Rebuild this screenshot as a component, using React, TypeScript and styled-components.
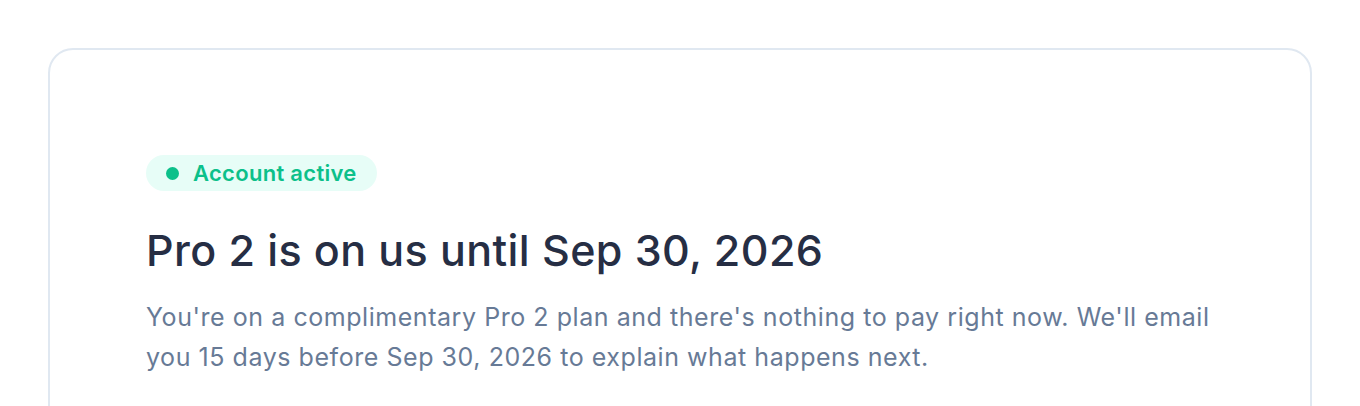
import React from 'react';
import styled, { createGlobalStyle } from 'styled-components';

const GlobalStyle = createGlobalStyle`
    html, body {
        margin: 0;
        padding: 0;
        background: #ffffff;
    }
    body {
        font-family: Inter, "Noto Sans", "Liberation Sans", sans-serif;
        -webkit-font-smoothing: antialiased;
    }
`;

const Page = styled.div`
    padding: 48px 48px 0 48px;
    height: 406px;
    box-sizing: border-box;
    overflow: hidden;
`;

const Card = styled.section`
    border: 2px solid #e0e8f1;
    border-radius: 25px;
    background: #ffffff;
    padding: 105px 96px 64px 96px;
    min-height: 500px;
    display: flex;
    flex-direction: column;
    align-items: flex-start;
`;

const StatusPill = styled.div<{ $tone: string; $bg: string }>`
    display: inline-flex;
    align-items: center;
    gap: 14px;
    height: 36px;
    padding: 0 20px 0 20px;
    border-radius: 18px;
    background: ${(p) => p.$bg};
    color: ${(p) => p.$tone};
    font-size: 22px;
    font-weight: 560;
    letter-spacing: 0.3px;
`;

const Dot = styled.span<{ $tone: string }>`
    width: 13px;
    height: 13px;
    border-radius: 50%;
    background: ${(p) => p.$tone};
`;

const Title = styled.h1`
    margin: 33px 0 0 0;
    font-size: 43px;
    line-height: 52px;
    font-weight: 550;
    color: #262e44;
    letter-spacing: 0.4px;
`;

const Body = styled.p`
    margin: 21px 0 0 0;
    max-width: 1080px;
    font-size: 25px;
    line-height: 40px;
    font-weight: 400;
    color: #677a96;
    letter-spacing: 0.55px;
`;

const App = () => {
    const until = 'Sep 30, 2026';

    return (
        <Page>
            <GlobalStyle />
            <Card>
                <StatusPill $tone="#0cc08a" $bg="#e7fdf7">
                    <Dot $tone="#0cc08a" />
                    Account active
                </StatusPill>
                <Title>Pro 2 is on us until {until}</Title>
                <Body>
                    You're on a complimentary Pro 2 plan and there's nothing to pay right now.
                    We'll email you 15 days before {until} to explain what happens next.
                </Body>
            </Card>
        </Page>
    );
};

export default App;
